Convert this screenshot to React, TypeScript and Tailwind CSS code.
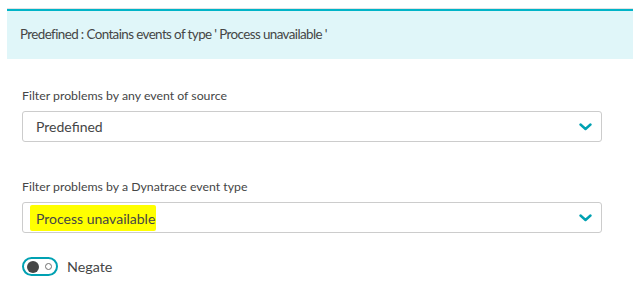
import React from 'react';

const font = { fontFamily: 'Lato, "Open Sans", "Liberation Sans", sans-serif' };

function ChevronDown() {
  return (
    <svg width="13" height="8" viewBox="0 0 13 8" className="text-[#00a1b2]">
      <path d="M1.5 1.5 L6.5 6 L11.5 1.5" fill="none" stroke="currentColor" strokeWidth="2.4" strokeLinecap="round" strokeLinejoin="round" />
    </svg>
  );
}

function SelectField({ label, value, highlight }: { label: string; value: string; highlight?: boolean }) {
  return (
    <div className="flex flex-col">
      <label className="text-[12.3px] leading-[16px] text-[#454646] mb-[7px]">{label}</label>
      <div className="h-[31px] w-[580px] border border-[#cccccc] rounded-[3px] bg-white flex items-center justify-between pl-[13px] pr-[9px]">
        <span
          className={`text-[14px] text-[#454646] ${highlight ? 'bg-[#ffff00] pl-[6px] pr-[1px] -ml-[6px] pt-[3px] pb-[2px] rounded-[2px]' : ''}`}
        >
          {value}
        </span>
        <ChevronDown />
      </div>
    </div>
  );
}

export default function App() {
  return (
    <div className="w-[633px] h-[302px] bg-white overflow-hidden" style={font}>
      <div className="pt-[8px] pl-[7px]">
        <div className="border-t border-[#e2e2e2]">
          <div className="border-t-2 border-[#00b4c8] bg-[#e0f6f9] h-[50px] flex items-center pl-[13px] pb-[2px]">
            <span className="text-[13.4px] tracking-[-0.6px] text-[#454646]">Predefined : Contains events of type ' Process unavailable '</span>
          </div>
        </div>
      </div>

      <div className="pl-[22px] pt-[29px] flex flex-col">
        <SelectField label="Filter problems by any event of source" value="Predefined" />
        <div className="h-[37px]" />
        <SelectField label="Filter problems by a Dynatrace event type" value="Process unavailable" highlight />
        <div className="flex items-center gap-[9px] mt-[23px]">
          <div className="w-[36px] h-[19px] rounded-full border-2 border-[#00a1b2] flex items-center pl-[3px] gap-[6px]">
            <div className="w-[12px] h-[12px] rounded-full bg-[#454646]" />
            <div className="w-[7px] h-[7px] rounded-full border border-[#6f6f6f]" />
          </div>
          <span className="text-[14.3px] text-[#454646]">Negate</span>
        </div>
      </div>
    </div>
  );
}
